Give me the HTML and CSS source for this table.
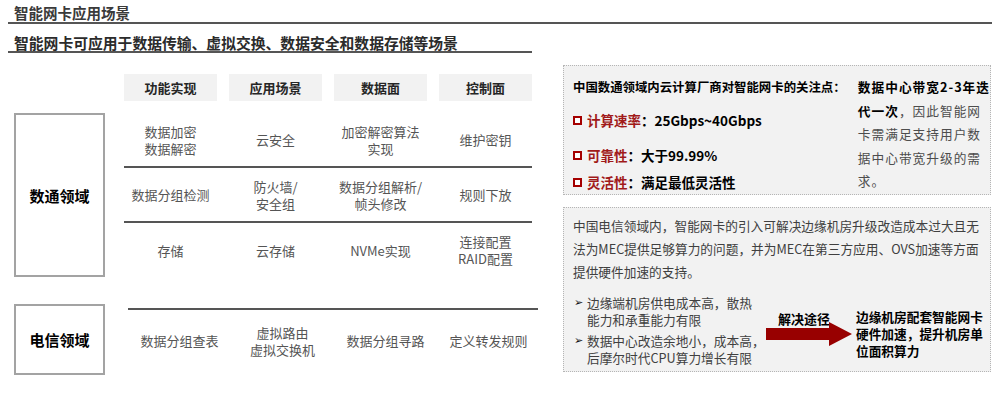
FILE: index.html
```html
<!DOCTYPE html>
<html lang="zh-CN">
<head>
<meta charset="utf-8">
<title>智能网卡应用场景</title>
<link rel="stylesheet" href="styles.css">
</head>
<body>
<div class="page">
  <h1 class="title">智能网卡应用场景</h1>
  <h2 class="subtitle">智能网卡可应用于数据传输、虚拟交换、数据安全和数据存储等场景</h2>
  <div class="main">
    <div class="matrix">
      <div class="hdr">
        <div class="hcell">功能实现</div>
        <div class="hcell">应用场景</div>
        <div class="hcell">数据面</div>
        <div class="hcell">控制面</div>
      </div>
      <div class="group">
        <div class="label tall">数通领域</div>
        <div class="rows">
          <div class="row r1">
            <div class="cell">数据加密<br>数据解密</div>
            <div class="cell">云安全</div>
            <div class="cell">加密解密算法<br>实现</div>
            <div class="cell">维护密钥</div>
          </div>
          <div class="row r2">
            <div class="cell">数据分组检测</div>
            <div class="cell">防火墙/<br>安全组</div>
            <div class="cell">数据分组解析/<br>帧头修改</div>
            <div class="cell">规则下放</div>
          </div>
          <div class="row r3">
            <div class="cell">存储</div>
            <div class="cell">云存储</div>
            <div class="cell">NVMe实现</div>
            <div class="cell">连接配置<br>RAID配置</div>
          </div>
        </div>
      </div>
      <div class="group group2">
        <div class="label short">电信领域</div>
        <div class="rows rows2">
          <div class="row r4">
            <div class="cell">数据分组查表</div>
            <div class="cell">虚拟路由<br>虚拟交换机</div>
            <div class="cell">数据分组寻路</div>
            <div class="cell">定义转发规则</div>
          </div>
        </div>
      </div>
    </div>
    <div class="side">
      <div class="panel p1">
        <div class="focus">
          <div class="focus-head">中国数通领域内云计算厂商对智能网卡的关注点：</div>
          <div class="pt pt1"><span class="box"></span><span class="red">计算速率</span>：25Gbps~40Gbps</div>
          <div class="pt pt2"><span class="box"></span><span class="red">可靠性</span>：大于99.99%</div>
          <div class="pt pt3"><span class="box"></span><span class="red">灵活性</span>：满足最低灵活性</div>
        </div>
        <div class="bw"><b>数据中心带宽2-3年迭<br>代一次</b>，因此智能网<br>卡需满足支持用户数<br>据中心带宽升级的需<br>求。</div>
      </div>
      <div class="panel p2">
        <p class="tele">中国电信领域内，智能网卡的引入可解决边缘机房升级改造成本过大且无<br>法为MEC提供足够算力的问题，并为MEC在第三方应用、OVS加速等方面<br>提供硬件加速的支持。</p>
        <div class="flow">
          <ul class="issues">
            <li>边缘端机房供电成本高，散热<br>能力和承重能力有限</li>
            <li>数据中心改造余地小，成本高，<br>后摩尔时代CPU算力增长有限</li>
          </ul>
          <div class="way">
            <div class="way-label">解决途径</div>
            <svg class="arrow" width="86" height="24" viewBox="0 0 86 24"><polygon points="0,6 63,6 63,0 86,12 63,24 63,18 0,18" fill="#980000"/></svg>
          </div>
          <div class="result">边缘机房配套智能网卡<br>硬件加速，提升机房单<br>位面积算力</div>
        </div>
      </div>
    </div>
  </div>
</div>
</body>
</html>
```

FILE: styles.css
```css
* { box-sizing: border-box; }
html, body { margin: 0; padding: 0; background: #fff; }
body {
  font-family: "Noto Sans CJK SC", "Liberation Sans", sans-serif;
  color: #333;
}
.page { width: 1000px; height: 399px; overflow: hidden; }

.title {
  margin: 0 0 0 8px;
  width: 984px;
  padding: 3px 0 0 6px;
  font-size: 14.5px;
  line-height: 19px;
  font-weight: 700;
  color: #3a3a3a;
  border-bottom: 2px solid #555;
  height: 24px;
}
.subtitle {
  margin: 10px 0 0 8px;
  width: 524px;
  padding: 0 0 0 6px;
  font-size: 14.8px;
  line-height: 17px;
  font-weight: 700;
  color: #2b2b2b;
  border-bottom: 2px solid #555;
  height: 19px;
}

.main { display: flex; padding-left: 14px; }
.matrix { width: 526px; padding-top: 21px; }

.hdr { display: flex; gap: 12px; margin-left: 110px; }
.hcell {
  width: 93px; height: 27px;
  background: #f2f2f2;
  display: flex; align-items: center; justify-content: center;
  font-size: 13px; font-weight: 700; color: #262626;
}

.group { display: flex; margin-top: 12px; }
.group2 { margin-top: 27px; }
.label {
  width: 91px;
  border: 2px solid #a3a3a3;
  display: flex; align-items: center; justify-content: center;
  font-size: 15px; font-weight: 700; color: #000;
}
.label.tall { height: 164px; }
.label.short { height: 71px; }

.rows { margin-left: 19px; width: 408px; }
.rows2 { margin-left: 23px; margin-top: 4px; width: 410px; border-top: 2px solid #555; }
.row {
  display: grid;
  grid-template-columns: repeat(4, 93px);
  column-gap: 12px;
  align-items: center;
}
.r1, .r2 { height: 55px; border-bottom: 2px solid #555; }
.r3 { height: 54px; }
.r4 { height: 61px; padding-left: 5px; column-gap: 10px; }
.cell {
  text-align: center;
  font-size: 13px;
  line-height: 17px;
  color: #555;
  white-space: nowrap;
}

.side { margin-left: 23px; width: 428px; padding-top: 12px; }
.panel {
  background: #f2f2f2;
  border: 1px dotted #b5b5b5;
}
.p1 { height: 130px; display: flex; padding: 9px 0 0 9px; }
.focus { width: 287px; }
.focus-head { font-size: 12.4px; line-height: 24px; font-weight: 700; color: #000; white-space: nowrap; }
.pt {
  font-size: 13.5px; line-height: 24px; font-weight: 700; color: #000;
  display: flex; align-items: center; white-space: nowrap;
}
.pt1 { margin-top: 9px; }
.pt2 { margin-top: 11px; }
.pt3 { margin-top: 3px; }
.box {
  width: 9px; height: 9px;
  border: 2px solid #a50000;
  background: #fff;
  margin-right: 5px;
}
.red { color: #a11a1a; }
.bw {
  font-size: 12.7px; line-height: 23.5px;
  letter-spacing: 1px;
  color: #4d4d4d;
  white-space: nowrap;
}
.bw b { color: #000; }

.p2 { height: 165px; margin-top: 12px; padding: 6px 0 0 9px; }
.tele {
  margin: 0;
  font-size: 12.7px; line-height: 23px;
  color: #404040;
  white-space: nowrap;
}
.flow { display: flex; margin-top: 11px; }
.issues {
  list-style: none; margin: 0; padding: 0 0 0 2px;
  width: 187px;
}
.issues li {
  position: relative;
  padding-left: 12px;
  font-size: 12.7px; line-height: 17px;
  color: #404040;
  white-space: nowrap;
}
.issues li + li { margin-top: 4px; }
.issues li::before {
  content: "➢";
  position: absolute; left: -1px; top: 0;
  font-family: "DejaVu Sans", sans-serif;
  font-size: 11px; color: #111;
}
.way { margin-left: 6px; margin-top: 17px; width: 86px; display: flex; flex-direction: column; }
.way-label {
  font-size: 13px; line-height: 16px; font-weight: 700; color: #000;
  padding-left: 12px;
}
.arrow { display: block; margin-top: -5px; }
.result {
  margin-left: 4px; margin-top: 14px;
  font-size: 12.7px; line-height: 17px; font-weight: 700; color: #000;
  white-space: nowrap;
}
```
